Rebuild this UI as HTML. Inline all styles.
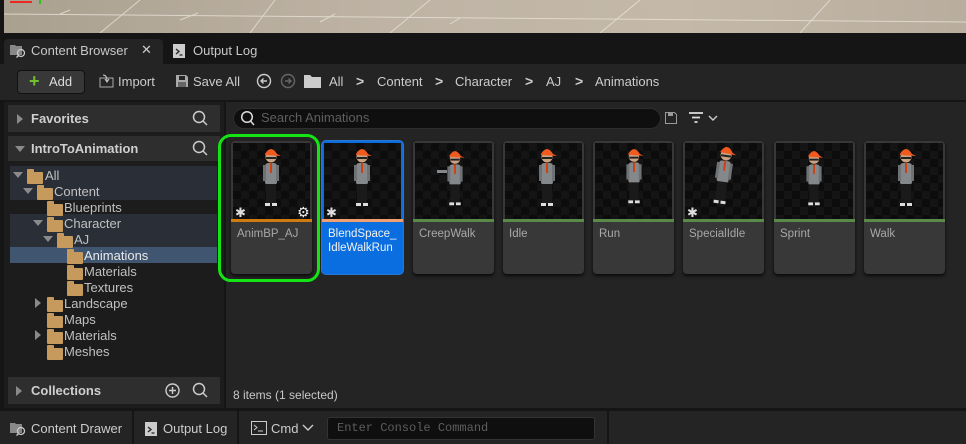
<!DOCTYPE html>
<html><head><meta charset="utf-8"><style>
*{box-sizing:border-box;margin:0;padding:0}
body{width:966px;height:444px;background:#151515;font-family:"Liberation Sans",sans-serif;color:#c0c0c0;font-size:12px;position:relative;overflow:hidden}
.abs{position:absolute}
.t{position:absolute;white-space:nowrap}
.folder{position:absolute;width:16px;height:12px;background:#c59a5c;border-radius:1px}
.folder:before{content:"";position:absolute;left:0;top:-3px;width:7px;height:4px;background:#c59a5c;border-radius:1px 1px 0 0}
.tri{position:absolute;width:0;height:0;border-left:5px solid transparent;border-right:5px solid transparent;border-top:6px solid #8a8a8a}
.trir{position:absolute;width:0;height:0;border-top:5px solid transparent;border-bottom:5px solid transparent;border-left:6px solid #8a8a8a}
.tile{position:absolute;top:141px;width:81px;height:133px;background:#383838;border-radius:4px;overflow:hidden;box-shadow:0 2px 3px #0a0a0a}
.thumb{position:absolute;left:2px;top:2px;width:77px;height:76px;background-color:#0c0c0c;background-image:linear-gradient(45deg,#141414 25%,transparent 25%,transparent 75%,#141414 75%),linear-gradient(45deg,#141414 25%,transparent 25%,transparent 75%,#141414 75%);background-size:16px 16px;background-position:0 0,8px 8px}
.bar{position:absolute;left:0;top:78px;width:81px;height:3px;background:#5a8a4a}
.lbl{position:absolute;left:6px;top:86px;font-size:11.5px;color:#a8a8a8;line-height:14px}
.star{position:absolute;left:4px;top:64px;color:#ddd;font-size:13px}
.chev{position:absolute;top:73px;font-size:14px;color:#ccc;font-weight:bold}
</style></head><body>
<svg width="0" height="0" style="position:absolute"><defs>
<g id="ch">
<rect x="-6" y="12" width="12" height="22" rx="3" fill="#85888b"/>
<rect x="-5" y="33" width="10" height="20" fill="#1a1a1a"/>
<rect x="-8" y="14" width="3" height="16" fill="#6f7275"/>
<rect x="5" y="14" width="3" height="16" fill="#6f7275"/>
<rect x="-1" y="12" width="2" height="10" fill="#d04010"/>
<circle cx="0" cy="6" r="5.5" fill="#c9a183"/>
<path d="M-6 3 Q0 -7 6 3 L10 5 L-6 4Z" fill="#f05a1e"/>
<rect x="-5" y="6" width="10" height="2" fill="#222"/>
<rect x="-6" y="52" width="5" height="3" fill="#ddd"/><rect x="1" y="52" width="5" height="3" fill="#ddd"/>
</g></defs></svg>

<div class="abs" style="left:0;top:0;width:966px;height:33px;background:linear-gradient(90deg,#aaa090,#beb3a4 40%,#c4b9a9 70%,#b8ad9e)"></div>
<svg class="abs" style="left:0;top:0" width="966" height="33"><g stroke="#e8e2d8" stroke-width="1" opacity=".8"><line x1="100" y1="33" x2="140" y2="0"/><line x1="250" y1="33" x2="275" y2="0"/><line x1="390" y1="33" x2="430" y2="0"/><line x1="0" y1="14" x2="966" y2="22"/><line x1="60" y1="14" x2="70" y2="10"/><line x1="180" y1="20" x2="198" y2="13"/><line x1="320" y1="22" x2="335" y2="14"/><line x1="450" y1="24" x2="460" y2="18"/><line x1="600" y1="33" x2="640" y2="0"/><line x1="800" y1="33" x2="830" y2="0"/></g><line x1="10" y1="2" x2="32" y2="2" stroke="red" stroke-width="1.5"/><line x1="40" y1="0" x2="40" y2="4" stroke="#0c0" stroke-width="1.5"/></svg>
<div class="abs" style="left:0;top:0;width:4px;height:33px;background:#151515"></div>

<div class="abs" style="left:4px;top:39px;width:159px;height:25px;background:#242424;border-radius:4px 4px 0 0"></div>
<svg class="abs" style="left:9px;top:42px" width="18" height="16"><path d="M1 3h5l1 1h6v9H1z" fill="#888"/><circle cx="12" cy="11" r="3.5" fill="none" stroke="#ccc" stroke-width="1.3"/><line x1="9.5" y1="13.5" x2="7.5" y2="15.5" stroke="#ccc" stroke-width="1.3"/></svg>
<div class="t" style="left:31px;top:43px;font-size:13px;color:#c8c8c8">Content Browser</div>
<div class="t" style="left:141px;top:42px;font-size:13px;color:#ccc">✕</div>
<svg class="abs" style="left:173px;top:42px" width="12" height="16"><rect x="0" y="2" width="12" height="14" fill="#ccc"/><path d="M3 7l3 2.5L3 12M6.5 13h3" stroke="#222" stroke-width="1.3" fill="none"/></svg>
<div class="t" style="left:193px;top:43px;font-size:13px;color:#c8c8c8">Output Log</div>

<div class="abs" style="left:0;top:64px;width:966px;height:36px;background:#242424"></div>
<div class="abs" style="left:17px;top:70px;width:68px;height:24px;background:#383838;border:1px solid #111;border-radius:4px"></div>
<div class="t" style="left:29px;top:71px;font-size:18px;color:#6fc12f;font-weight:bold">+</div>
<div class="t" style="left:49px;top:74px;font-size:13px;color:#ddd">Add</div>
<svg class="abs" style="left:99px;top:74px" width="16" height="14"><rect x="1" y="4" width="13" height="9" fill="none" stroke="#aaa"/><path d="M4 1q4 0 4 6M6 5l2 3 2-3" stroke="#ccc" fill="none"/></svg>
<div class="t" style="left:118px;top:74px;font-size:13px;color:#ccc">Import</div>
<svg class="abs" style="left:175px;top:74px" width="14" height="14"><path d="M1 1h10l2 2v10H1z" fill="#aaa"/><rect x="4" y="2" width="6" height="4" fill="#242424"/><rect x="3" y="8" width="8" height="5" fill="#666"/></svg>
<div class="t" style="left:193px;top:74px;font-size:13px;color:#ccc">Save All</div>
<svg class="abs" style="left:256px;top:72px" width="40" height="18"><circle cx="8" cy="9" r="6.5" fill="none" stroke="#ccc" stroke-width="1.4"/><path d="M11 9H5M7.5 6.5L5 9l2.5 2.5" stroke="#ccc" stroke-width="1.4" fill="none"/><circle cx="32" cy="9" r="6.5" fill="none" stroke="#666" stroke-width="1.4"/><path d="M29 9h6M32.5 6.5L35 9l-2.5 2.5" stroke="#666" stroke-width="1.4" fill="none"/></svg>
<svg class="abs" style="left:304px;top:74px" width="17" height="14"><path d="M0 1h6l2 2h9v11H0z" fill="#ccc"/></svg>
<div class="t" style="left:329px;top:74px;font-size:13px;color:#ccc">All</div>
<div class="chev" style="left:356px">&gt;</div>
<div class="t" style="left:377px;top:74px;font-size:13px;color:#ccc">Content</div>
<div class="chev" style="left:435px">&gt;</div>
<div class="t" style="left:455px;top:74px;font-size:13px;color:#ccc">Character</div>
<div class="chev" style="left:525px">&gt;</div>
<div class="t" style="left:546px;top:74px;font-size:13px;color:#ccc">AJ</div>
<div class="chev" style="left:575px">&gt;</div>
<div class="t" style="left:595px;top:74px;font-size:13px;color:#ccc">Animations</div>

<div class="abs" style="left:4px;top:102px;width:220px;height:306px;background:#1c1c1c"></div>
<div class="abs" style="left:8px;top:105px;width:212px;height:27px;background:#2e2e2e"></div>
<div class="trir" style="left:17px;top:114px"></div>
<div class="t" style="left:31px;top:111px;font-size:13px;font-weight:bold;color:#cfcfcf">Favorites</div>
<svg class="abs" style="left:192px;top:110px" width="17" height="17"><circle cx="7" cy="7" r="5.5" fill="none" stroke="#ccc" stroke-width="1.5"/><line x1="11" y1="11" x2="15" y2="15" stroke="#ccc" stroke-width="1.5"/></svg>
<div class="abs" style="left:8px;top:136px;width:212px;height:25px;background:#2e2e2e"></div>
<div class="tri" style="left:15px;top:146px"></div>
<div class="t" style="left:31px;top:141px;font-size:13px;font-weight:bold;color:#cfcfcf">IntroToAnimation</div>
<svg class="abs" style="left:192px;top:140px" width="17" height="17"><circle cx="7" cy="7" r="5.5" fill="none" stroke="#ccc" stroke-width="1.5"/><line x1="11" y1="11" x2="15" y2="15" stroke="#ccc" stroke-width="1.5"/></svg>
<div class="abs" style="left:10px;top:166px;width:207px;height:34px;background:#2a2f37"></div>
<div class="abs" style="left:10px;top:214px;width:207px;height:33px;background:#2a2f37"></div>
<div class="abs" style="left:10px;top:247px;width:207px;height:16px;background:#3f5570"></div>
<div class="tri" style="left:13px;top:172px"></div><div class="folder" style="left:27px;top:172px"></div><div class="t" style="left:45px;top:168px;font-size:13px">All</div>
<div class="tri" style="left:23px;top:188px"></div><div class="folder" style="left:37px;top:188px"></div><div class="t" style="left:54px;top:184px;font-size:13px">Content</div>
<div class="folder" style="left:47px;top:204px"></div><div class="t" style="left:64px;top:200px;font-size:13px">Blueprints</div>
<div class="tri" style="left:33px;top:220px"></div><div class="folder" style="left:47px;top:220px"></div><div class="t" style="left:64px;top:216px;font-size:13px">Character</div>
<div class="tri" style="left:43px;top:236px"></div><div class="folder" style="left:57px;top:236px"></div><div class="t" style="left:74px;top:232px;font-size:13px">AJ</div>
<div class="folder" style="left:67px;top:252px"></div><div class="t" style="left:84px;top:248px;font-size:13px;color:#e8e8e8">Animations</div>
<div class="folder" style="left:67px;top:268px"></div><div class="t" style="left:84px;top:264px;font-size:13px">Materials</div>
<div class="folder" style="left:67px;top:284px"></div><div class="t" style="left:84px;top:280px;font-size:13px">Textures</div>
<div class="trir" style="left:35px;top:298px"></div><div class="folder" style="left:47px;top:300px"></div><div class="t" style="left:64px;top:296px;font-size:13px">Landscape</div>
<div class="folder" style="left:47px;top:316px"></div><div class="t" style="left:64px;top:312px;font-size:13px">Maps</div>
<div class="trir" style="left:35px;top:330px"></div><div class="folder" style="left:47px;top:332px"></div><div class="t" style="left:64px;top:328px;font-size:13px">Materials</div>
<div class="folder" style="left:47px;top:348px"></div><div class="t" style="left:64px;top:344px;font-size:13px">Meshes</div>
<div class="abs" style="left:8px;top:377px;width:212px;height:27px;background:#2e2e2e"></div>
<div class="trir" style="left:16px;top:386px"></div>
<div class="t" style="left:31px;top:383px;font-size:13px;font-weight:bold;color:#cfcfcf">Collections</div>
<svg class="abs" style="left:164px;top:382px" width="17" height="17"><circle cx="8.5" cy="8.5" r="6.5" fill="none" stroke="#ccc" stroke-width="1.4"/><path d="M8.5 5v7M5 8.5h7" stroke="#ccc" stroke-width="1.4"/></svg>
<svg class="abs" style="left:192px;top:382px" width="17" height="17"><circle cx="7" cy="7" r="5.5" fill="none" stroke="#ccc" stroke-width="1.5"/><line x1="11" y1="11" x2="15" y2="15" stroke="#ccc" stroke-width="1.5"/></svg>

<div class="abs" style="left:226px;top:102px;width:740px;height:306px;background:#242424"></div>
<div class="abs" style="left:233px;top:108px;width:428px;height:21px;background:#0f0f0f;border:1px solid #2e2e2e;border-radius:11px"></div>
<svg class="abs" style="left:240px;top:110px" width="16" height="17"><circle cx="7" cy="7" r="5.3" fill="none" stroke="#ddd" stroke-width="1.5"/><line x1="10.5" y1="11" x2="14" y2="15" stroke="#ddd" stroke-width="1.5"/></svg>
<div class="t" style="left:261px;top:110px;font-size:13px;color:#5e5e5e">Search Animations</div>
<svg class="abs" style="left:665px;top:112px" width="12" height="12"><path d="M.5.5h9l2 2v9H.5z" fill="none" stroke="#999"/><rect x="3" y="1" width="5" height="3" fill="#999"/></svg>
<svg class="abs" style="left:689px;top:112px" width="32" height="14"><path d="M0 1h14M3 5.5h8M5.5 10h3" stroke="#ddd" stroke-width="1.8"/><path d="M20 4l4 4 4-4" stroke="#ccc" stroke-width="1.4" fill="none"/></svg>

<div class="abs" style="left:218px;top:134px;width:102px;height:148px;border:3px solid #14e414;border-radius:13px"></div>
<div class="tile" style="left:231px"><div class="thumb"><svg width="77" height="76"><use href="#ch" transform="translate(38,8)"/><text x="64" y="74" font-size="14" fill="#eee" font-family="DejaVu Sans">⚙</text></svg></div><div class="bar" style="background:#d07a10"></div><div class="star">✱</div><div class="lbl">AnimBP_AJ</div></div>
<div class="tile" style="left:322px;background:#0a6ee0;box-shadow:0 0 0 1px #2a77d0"><div class="thumb"><svg width="77" height="76"><use href="#ch" transform="translate(38,8)"/></svg></div><div class="bar" style="background:#f0a070"></div><div class="star">✱</div><div class="lbl" style="color:#f2f2f2">BlendSpace_<br>IdleWalkRun</div></div>
<div class="tile" style="left:413px"><div class="thumb"><svg width="77" height="76"><use href="#ch" transform="translate(40,10) scale(.95)"/><rect x="22" y="27" width="10" height="3" fill="#85888b"/></svg></div><div class="bar"></div><div class="lbl">CreepWalk</div></div>
<div class="tile" style="left:503px"><div class="thumb"><svg width="77" height="76"><use href="#ch" transform="translate(42,8)"/></svg></div><div class="bar"></div><div class="lbl">Idle</div></div>
<div class="tile" style="left:593px"><div class="thumb"><svg width="77" height="76"><use href="#ch" transform="translate(39,8) scale(.95)"/></svg></div><div class="bar"></div><div class="lbl">Run</div></div>
<div class="tile" style="left:683px"><div class="thumb"><svg width="77" height="76"><use href="#ch" transform="translate(42,6) rotate(8)"/></svg></div><div class="bar"></div><div class="star">✱</div><div class="lbl">SpecialIdle</div></div>
<div class="tile" style="left:774px"><div class="thumb"><svg width="77" height="76"><use href="#ch" transform="translate(38,10) scale(.95)"/></svg></div><div class="bar"></div><div class="lbl">Sprint</div></div>
<div class="tile" style="left:864px"><div class="thumb"><svg width="77" height="76"><use href="#ch" transform="translate(40,8)"/></svg></div><div class="bar"></div><div class="lbl">Walk</div></div>
<div class="t" style="left:233px;top:388px;font-size:12px;color:#c8c8c8">8 items (1 selected)</div>

<div class="abs" style="left:0;top:411px;width:966px;height:33px;background:#242424"></div>
<div class="abs" style="left:132px;top:411px;width:2px;height:33px;background:#151515"></div>
<div class="abs" style="left:237px;top:411px;width:2px;height:33px;background:#151515"></div>
<div class="abs" style="left:607px;top:411px;width:2px;height:33px;background:#151515"></div>
<svg class="abs" style="left:9px;top:420px" width="18" height="16"><path d="M1 3h5l1 1h6v9H1z" fill="#888"/><circle cx="12" cy="11" r="3.5" fill="none" stroke="#ccc" stroke-width="1.3"/><line x1="9.5" y1="13.5" x2="7.5" y2="15.5" stroke="#ccc" stroke-width="1.3"/></svg>
<div class="t" style="left:31px;top:421px;font-size:13px;color:#ccc">Content Drawer</div>
<svg class="abs" style="left:145px;top:420px" width="12" height="16"><rect x="0" y="2" width="12" height="14" fill="#ccc"/><path d="M3 7l3 2.5L3 12M6.5 13h3" stroke="#222" stroke-width="1.3" fill="none"/></svg>
<div class="t" style="left:163px;top:421px;font-size:13px;color:#ccc">Output Log</div>
<svg class="abs" style="left:251px;top:421px" width="16" height="14"><rect x=".5" y=".5" width="15" height="13" fill="none" stroke="#ccc"/><path d="M3 4l3 2.5L3 9M7 10h5" stroke="#ccc" fill="none"/></svg>
<div class="t" style="left:271px;top:421px;font-size:13px;color:#ccc">Cmd</div>
<svg class="abs" style="left:302px;top:424px" width="12" height="8"><path d="M1 1l5 5 5-5" stroke="#ccc" stroke-width="1.4" fill="none"/></svg>
<div class="abs" style="left:327px;top:417px;width:268px;height:23px;background:#0f0f0f;border:1px solid #333;border-radius:3px"></div>
<div class="t" style="left:337px;top:421px;font-size:12px;color:#5e5e5e;font-family:'Liberation Mono',monospace">Enter Console Command</div>
</body></html>
